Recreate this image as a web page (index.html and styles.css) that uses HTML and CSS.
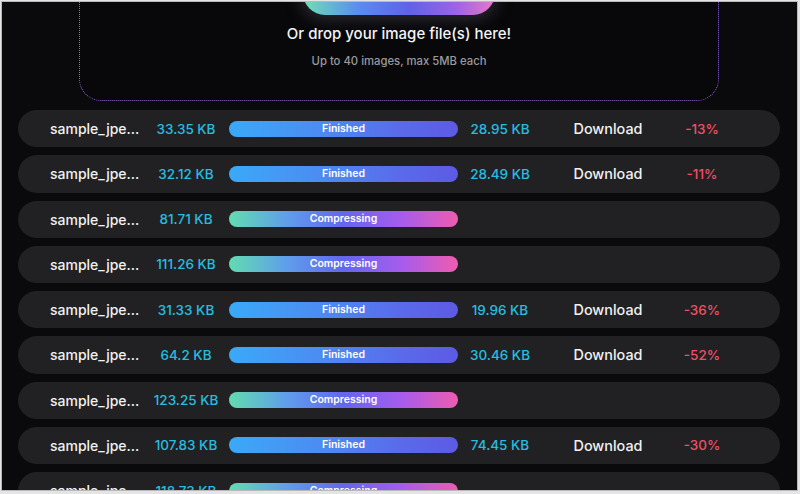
FILE: index.html
```html
<!DOCTYPE html>
<html lang="en">
<head>
<meta charset="utf-8">
<title>Image Compressor</title>
<link rel="stylesheet" href="styles.css">
</head>
<body>
<div class="screen">
  <div class="dropzone">
    <div class="upload-btn"></div>
    <p class="drop-title">Or drop your image file(s) here!</p>
    <p class="drop-sub">Up to 40 images, max 5MB each</p>
  </div>
  <div class="list">
    <div class="row">
      <span class="name">sample_jpe...</span><span class="size">33.35 KB</span>
      <div class="bar done">Finished</div>
      <span class="size">28.95 KB</span><span class="dl">Download</span><span class="pct">-13%</span>
    </div>
    <div class="row">
      <span class="name">sample_jpe...</span><span class="size">32.12 KB</span>
      <div class="bar done">Finished</div>
      <span class="size">28.49 KB</span><span class="dl">Download</span><span class="pct">-11%</span>
    </div>
    <div class="row">
      <span class="name">sample_jpe...</span><span class="size">81.71 KB</span>
      <div class="bar busy">Compressing</div>
    </div>
    <div class="row">
      <span class="name">sample_jpe...</span><span class="size">111.26 KB</span>
      <div class="bar busy">Compressing</div>
    </div>
    <div class="row">
      <span class="name">sample_jpe...</span><span class="size">31.33 KB</span>
      <div class="bar done">Finished</div>
      <span class="size">19.96 KB</span><span class="dl">Download</span><span class="pct">-36%</span>
    </div>
    <div class="row">
      <span class="name">sample_jpe...</span><span class="size">64.2 KB</span>
      <div class="bar done">Finished</div>
      <span class="size">30.46 KB</span><span class="dl">Download</span><span class="pct">-52%</span>
    </div>
    <div class="row">
      <span class="name">sample_jpe...</span><span class="size">123.25 KB</span>
      <div class="bar busy">Compressing</div>
    </div>
    <div class="row">
      <span class="name">sample_jpe...</span><span class="size">107.83 KB</span>
      <div class="bar done">Finished</div>
      <span class="size">74.45 KB</span><span class="dl">Download</span><span class="pct">-30%</span>
    </div>
    <div class="row">
      <span class="name">sample_jpe...</span><span class="size">118.73 KB</span>
      <div class="bar busy">Compressing</div>
    </div>
  </div>
</div>
</body>
</html>
```
FILE: styles.css
```css
html, body {
  margin: 0;
  padding: 0;
  height: 494px;
  overflow: hidden;
  background: #e4e4e4;
}
.screen {
  margin: 2px 3px 0 2px;
  height: 488px;
  background: #0a0a0c;
  overflow: hidden;
  font-family: Inter, "Noto Sans", sans-serif;
  box-shadow: 0 0 0 1px #b9b9b9;
}
.dropzone {
  margin: -50px 78px 0 77px;
  height: 149px;
  padding-top: 18px;
  box-sizing: border-box;
  border: 1px dotted #9566e4;
  border-radius: 22px;
  background: #08080b;
  display: flex;
  flex-direction: column;
  align-items: center;
}
.upload-btn {
  width: 192px;
  height: 44px;
  border-radius: 22px;
  background: linear-gradient(90deg, #6fe0b6 0%, #5a8af0 30%, #5e62e8 55%, #9d64e6 80%, #ea78c8 100%);
  box-shadow: 0 2px 14px 4px rgba(60, 60, 70, 0.55);
}
.drop-title {
  margin: 9px 0 0;
  color: #f4f4f4;
  font-size: 15px;
  line-height: 20px;
  font-weight: 500;
}
.drop-sub {
  margin: 9px 0 0;
  color: #9a9a9e;
  font-size: 11.3px;
  line-height: 16px;
  font-weight: 500;
}
.list {
  margin: 9px 17px 0 16px;
  display: flex;
  flex-direction: column;
  gap: 8px;
}
.row {
  height: 37.25px;
  flex: none;
  border-radius: 19px;
  background: #212123;
  display: grid;
  grid-template-columns: 93px 72px 229px 70px 132px 42px;
  column-gap: 7px;
  align-items: center;
  padding-left: 32px;
  font-size: 13.5px;
  font-weight: 500;
  white-space: nowrap;
}
.name {
  color: #f2f2f2;
  font-size: 14px;
}
.size {
  color: #27bde0;
  text-align: center;
}
.dl {
  color: #f2f2f2;
  text-align: center;
  font-size: 14.4px;
}
.pct {
  color: #ee4f65;
  text-align: center;
}
.bar {
  height: 16px;
  border-radius: 8px;
  color: #fff;
  font-size: 10.5px;
  font-weight: 600;
  line-height: 16px;
  text-align: center;
}
.done {
  background: linear-gradient(90deg, #3aa9f8 0%, #4c8cf2 40%, #5a6aea 75%, #5d5ae4 100%);
}
.busy {
  background: linear-gradient(90deg, #62dcb0 0%, #5f9fea 25%, #6466ee 50%, #a55ced 75%, #ee5cb0 100%);
}
```
